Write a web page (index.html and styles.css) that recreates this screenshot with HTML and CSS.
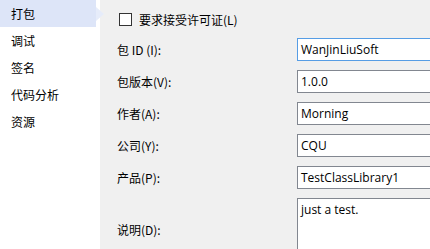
FILE: index.html
```html
<!DOCTYPE html>
<html lang="zh">
<head>
    <meta charset="UTF-8">
    <title>项目属性</title>
    <link rel="stylesheet" href="styles.css">
</head>
<body>
    <div class="page">
        <ul class="side-nav">
            <li class="nav-item active">打包</li>
            <li class="nav-item">调试</li>
            <li class="nav-item">签名</li>
            <li class="nav-item">代码分析</li>
            <li class="nav-item">资源</li>
        </ul>

        <div class="panel">
            <label class="check-row">
                <span class="check-box"></span>
                <span>要求接受许可证(L)</span>
            </label>

            <div class="form-grid">
                <div class="field-label">包 ID (I):</div>
                <div class="field-input focused">WanJinLiuSoft</div>

                <div class="field-label">包版本(V):</div>
                <div class="field-input">1.0.0</div>

                <div class="field-label">作者(A):</div>
                <div class="field-input">Morning</div>

                <div class="field-label">公司(Y):</div>
                <div class="field-input">CQU</div>

                <div class="field-label">产品(P):</div>
                <div class="field-input">TestClassLibrary1</div>

                <div class="field-label desc-label">说明(D):</div>
                <div class="field-input textarea">just a test.</div>
            </div>
        </div>
    </div>
</body>
</html>
```

FILE: styles.css
```css
html, body {
    margin: 0;
    height: 100%;
    overflow: hidden;
}

body {
    font-family: "Noto Sans", "Noto Sans CJK SC", sans-serif;
    font-size: 12px;
    color: #000;
    background-color: #f0f0f0;
}

.page {
    display: flex;
    height: 100%;
}

.side-nav {
    list-style: none;
    margin: 0;
    padding: 0;
    width: 100px;
    flex-shrink: 0;
    background-color: #fff;
    position: relative;
}

.nav-item {
    height: 27px;
    line-height: 27px;
    padding-left: 11px;
    font-family: "Noto Sans CJK SC", sans-serif;
    font-size: 12px;
    width: 85px;
}

.nav-item.active {
    background-color: #dde5f8;
    position: relative;
}

.nav-item.active::after {
    content: "";
    position: absolute;
    right: -8px;
    top: 7px;
    border-style: solid;
    border-width: 7px 0 7px 8px;
    border-color: transparent transparent transparent #e6ecfa;
}

.panel {
    flex: 1;
    padding: 6px 0 0 17px;
    overflow: hidden;
}

.check-row {
    display: flex;
    align-items: center;
    gap: 7px;
    height: 26px;
    padding-left: 2px;
    font-family: "Noto Sans CJK SC", sans-serif;
}

.check-box {
    width: 11px;
    height: 11px;
    border: 1px solid #333;
    background-color: #fff;
}

.form-grid {
    display: grid;
    grid-template-columns: 180px 200px;
    row-gap: 9px;
    margin-top: 6px;
}

.field-label {
    display: flex;
    align-items: center;
    font-family: "Noto Sans CJK SC", sans-serif;
}

.desc-label {
    align-items: flex-start;
    padding-top: 23px;
}

.field-input {
    height: 21px;
    line-height: 21px;
    padding: 0 3px;
    border: 1px solid #828790;
    background-color: #fff;
    font-family: "Open Sans", "Noto Sans CJK SC", sans-serif;
    font-size: 12px;
    white-space: nowrap;
}

.field-input.focused {
    border-color: #569de5;
}

.textarea {
    height: 60px;
    line-height: 20px;
    padding-top: 1px;
    align-self: start;
}
```
